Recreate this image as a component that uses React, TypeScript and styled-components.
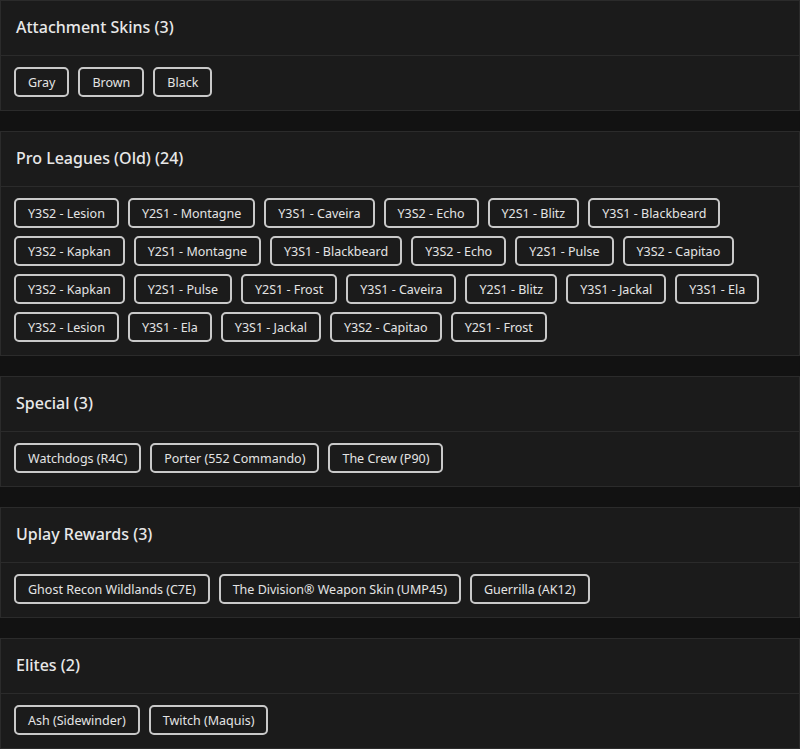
import React from 'react';
import styled, { createGlobalStyle } from 'styled-components';

const GlobalStyle = createGlobalStyle`
  body {
    margin: 0;
    background: #121212;
    font-family: 'Noto Sans', 'Open Sans', sans-serif;
    color: #e6e6e6;
  }
`;

const Page = styled.div`
  display: flex;
  flex-direction: column;
  gap: 20px;
`;

const Card = styled.section`
  background: #1b1b1b;
  border: 1px solid #2b2b2b;
`;

const CardHeader = styled.div`
  height: 52px;
  display: flex;
  align-items: center;
  padding: 0 15px 2px;
  border-bottom: 1px solid #2b2b2b;
  font-size: 16px;
  font-weight: 500;
  color: #e8e8e8;
`;

const ChipList = styled.div`
  display: flex;
  flex-wrap: wrap;
  gap: 8px 9px;
  padding: 11px 13px 13px;
`;

const Chip = styled.span`
  height: 30px;
  box-sizing: border-box;
  display: inline-flex;
  align-items: center;
  padding: 0 12px;
  border: 2px solid #c9c9c9;
  border-radius: 5px;
  font-size: 12.5px;
  color: #e4e4e4;
  white-space: nowrap;
`;

// skin categories
type Category = {
  title: string;
  items: string[];
};

const categories: Category[] = [
  { title: 'Attachment Skins', items: ['Gray', 'Brown', 'Black'] },
  {
    title: 'Pro Leagues (Old)',
    items: [
      'Y3S2 - Lesion', 'Y2S1 - Montagne', 'Y3S1 - Caveira', 'Y3S2 - Echo', 'Y2S1 - Blitz', 'Y3S1 - Blackbeard',
      'Y3S2 - Kapkan', 'Y2S1 - Montagne', 'Y3S1 - Blackbeard', 'Y3S2 - Echo', 'Y2S1 - Pulse', 'Y3S2 - Capitao',
      'Y3S2 - Kapkan', 'Y2S1 - Pulse', 'Y2S1 - Frost', 'Y3S1 - Caveira', 'Y2S1 - Blitz', 'Y3S1 - Jackal', 'Y3S1 - Ela',
      'Y3S2 - Lesion', 'Y3S1 - Ela', 'Y3S1 - Jackal', 'Y3S2 - Capitao', 'Y2S1 - Frost',
    ],
  },
  { title: 'Special', items: ['Watchdogs (R4C)', 'Porter (552 Commando)', 'The Crew (P90)'] },
  {
    title: 'Uplay Rewards',
    items: ['Ghost Recon Wildlands (C7E)', 'The Division® Weapon Skin (UMP45)', 'Guerrilla (AK12)'],
  },
  { title: 'Elites', items: ['Ash (Sidewinder)', 'Twitch (Maquis)'] },
];

function App() {
  return (
    <>
      <GlobalStyle />
      <Page>
        {categories.map((cat) => (
          <Card key={cat.title}>
            <CardHeader>
              {cat.title} ({cat.items.length})
            </CardHeader>
            <ChipList>
              {cat.items.map((item, idx) => (
                <Chip key={idx}>{item}</Chip>
              ))}
            </ChipList>
          </Card>
        ))}
      </Page>
    </>
  );
}

export default App;
